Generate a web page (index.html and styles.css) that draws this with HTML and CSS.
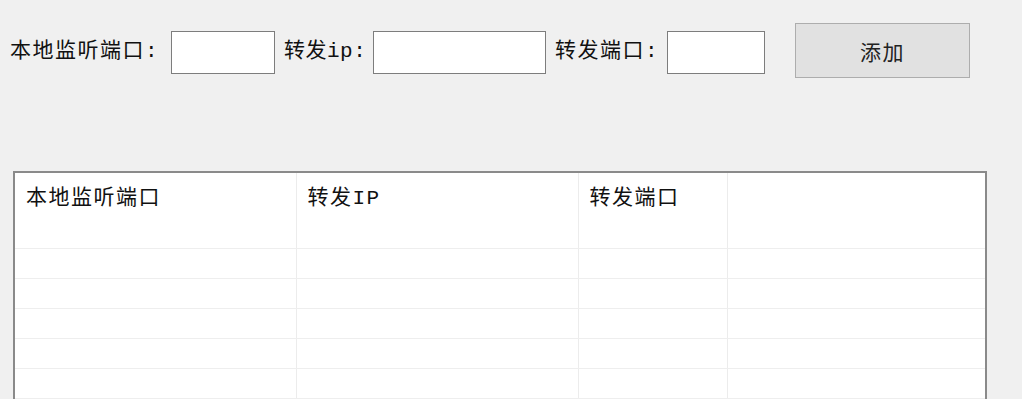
FILE: index.html
```html
<!DOCTYPE html>
<html>
  <head>
    <title>端口转发</title>
    <link rel="stylesheet" href="styles.css">
  </head>
  <body>
    <div class="bar">
      <label class="lbl lbl-local">本地监听端口:</label>
      <input class="field field-local" type="text">
      <label class="lbl lbl-ip">转发ip:</label>
      <input class="field field-ip" type="text">
      <label class="lbl lbl-port">转发端口:</label>
      <input class="field field-port" type="text">
      <button class="btn-add">添加</button>
    </div>

    <table class="grid">
      <colgroup>
        <col class="c1"><col class="c2"><col class="c3"><col class="c4">
      </colgroup>
      <tr class="head">
        <td>本地监听端口</td>
        <td>转发IP</td>
        <td>转发端口</td>
        <td></td>
      </tr>
      <tr><td></td><td></td><td></td><td></td></tr>
      <tr><td></td><td></td><td></td><td></td></tr>
      <tr><td></td><td></td><td></td><td></td></tr>
      <tr><td></td><td></td><td></td><td></td></tr>
      <tr><td></td><td></td><td></td><td></td></tr>
      <tr><td></td><td></td><td></td><td></td></tr>
    </table>
  </body>
</html>
```

FILE: styles.css
```css
html, body {
  margin: 0;
  padding: 0;
  background: #f0f0f0;
  overflow: hidden;
}

body {
  font-family: "Liberation Mono", "Noto Sans CJK SC", monospace;
  font-size: 21px;
  letter-spacing: 1.5px;
  color: #111;
}

.bar {
  display: flex;
  align-items: center;
  padding: 23px 0 0 10px;
  height: 55px;
}

.lbl {
  display: block;
  white-space: nowrap;
  line-height: 24px;
  padding-top: 2px;
}
.lbl-local { width: 161px; }
.lbl-ip    { width: 89px;  margin-left: 9px; letter-spacing: 0.5px; }
.lbl-port  { width: 112px; margin-left: 9px; }

.field {
  box-sizing: border-box;
  height: 43px;
  margin: 4px 0 0 0;
  border: 1px solid #7d7d7d;
  background: #fff;
  outline: none;
}
.field-local { width: 104px; }
.field-ip    { width: 173px; }
.field-port  { width: 98px; }

.btn-add {
  box-sizing: border-box;
  width: 175px;
  height: 55px;
  margin-left: 30px;
  border: 1px solid #adadad;
  background: #e1e1e1;
  font-family: "Noto Sans CJK SC", sans-serif;
  font-size: 21px;
  letter-spacing: 1.5px;
  color: #222;
}

.grid {
  margin: 93px 0 0 13px;
  width: 974px;
  border-collapse: collapse;
  table-layout: fixed;
  background: #fff;
  border-top: 2px solid #8a8a8a;
  border-left: 2px solid #8a8a8a;
  border-right: 2px solid #8a8a8a;
  font-size: 21px;
}

.c1 { width: 282px; }
.c2 { width: 282px; }
.c3 { width: 149px; }

.grid td {
  box-sizing: border-box;
  height: 30px;
  padding: 0 0 0 11px;
  border-right: 1px solid #ececec;
  border-bottom: 1px solid #eeeeee;
}
.grid td:last-child { border-right: none; }

.grid .head td {
  height: 76px;
  vertical-align: top;
  padding-top: 14px;
  line-height: 24px;
}
```
